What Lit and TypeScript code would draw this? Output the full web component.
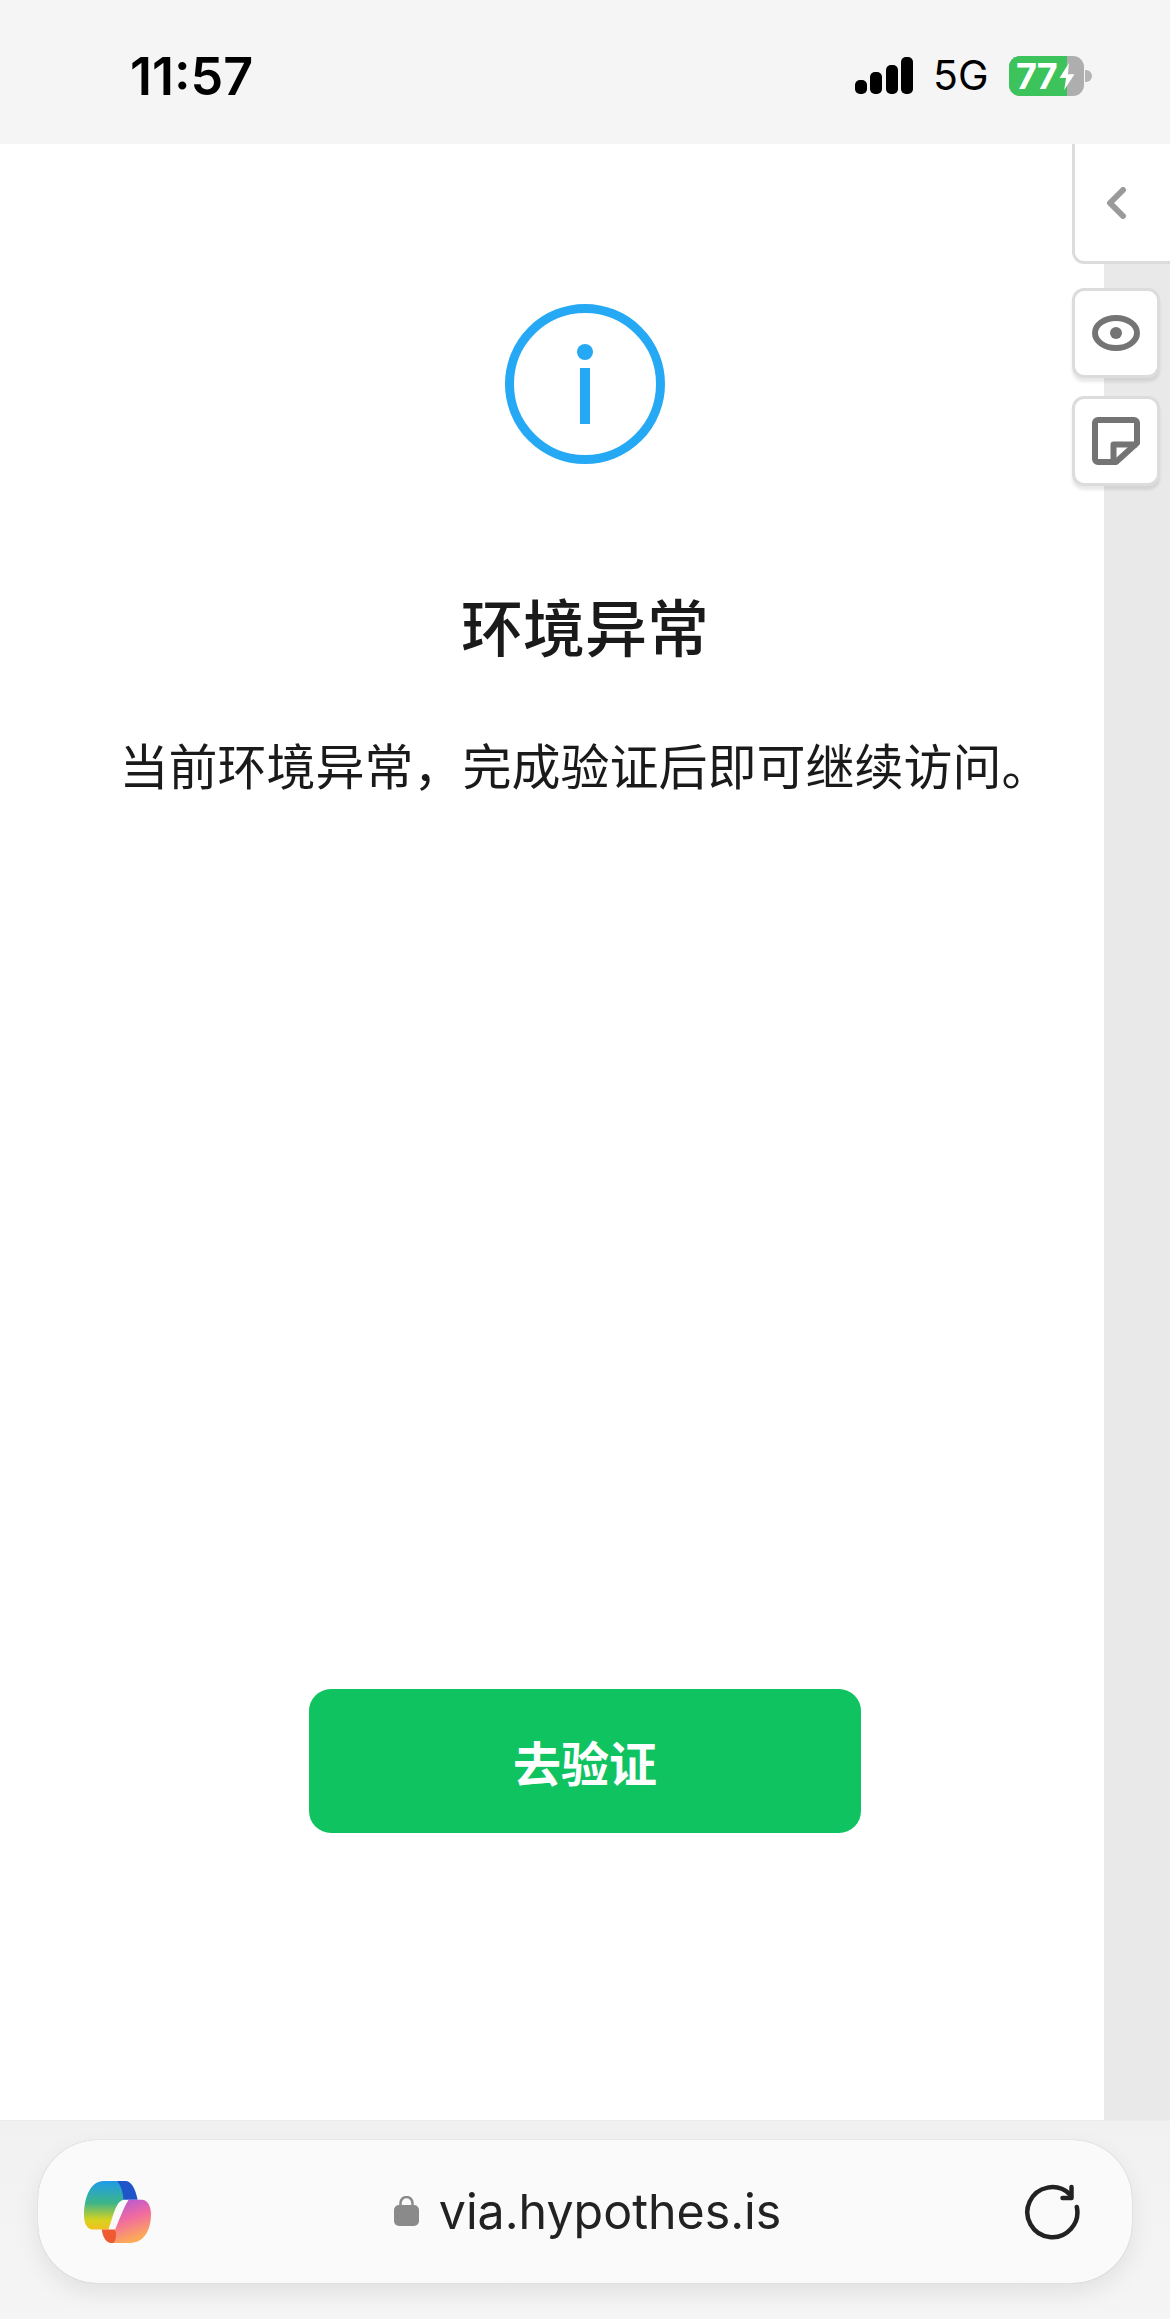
import { LitElement, html, css } from "lit";
import { customElement } from "lit/decorators.js";

@customElement("app-root")
export class AppRoot extends LitElement {
  static styles = css`
    :host { display: block; width: 1170px; height: 2319px; overflow: hidden; background: #fff; font-family: "Noto Sans CJK SC", "Noto Sans", sans-serif; }
    .page { display: flex; flex-direction: column; height: 2319px; }
    .status { height: 144px; flex: none; background: #f5f5f5; display: flex; justify-content: space-between; align-items: center; padding: 10px 78px 0 130px; box-sizing: border-box; }
    .time { font: 600 52px/1 Inter, "Liberation Sans", sans-serif; color: #000; }
    .sys { display: flex; align-items: center; margin-top: -3px; }
    .sig { width: 58px; height: 37px; display: block; }
    .net { font: 400 41px/1 Inter, "Liberation Sans", sans-serif; color: #000; margin-left: 20px; width: 54px; }
    .bat { margin-left: 22px; width: 75px; height: 40px; border-radius: 11px; background: #aeaeae; position: relative; display: flex; }
    .bat-fill { width: 58px; background: #3cc35b; border-radius: 11px 0 0 11px; }
    .bat-txt { position: absolute; left: 7px; top: 0; font: 700 36px/40px Inter, "Liberation Sans", sans-serif; color: #fff; letter-spacing: -1px; }
    .bolt { position: absolute; left: 49px; top: 7px; width: 18px; height: 27px; }
    .nub { width: 7px; height: 12px; margin-left: 1px; background: #b5b5b5; border-radius: 0 6px 6px 0; }

    .main { flex: 1; position: relative; display: flex; flex-direction: column; align-items: center; background: #fff; }
    .rail { position: absolute; left: 1104px; right: 0; top: 119px; bottom: 0; background: #e9e9e9; }
    .tab { position: absolute; left: 1072px; right: 0; top: 0; height: 120px; box-sizing: border-box; background: #fff; border: 3px solid #dcdcdc; border-width: 0 0 3px 3px; border-radius: 0 0 0 12px; display: flex; align-items: center; justify-content: center; padding-right: 14px; }
    .tab svg { width: 22px; height: 32px; }
    .tool { position: absolute; left: 1072px; width: 88px; height: 90px; box-sizing: border-box; background: #fff; border: 3px solid #dcdcdc; border-radius: 12px; box-shadow: 0 4px 3px rgba(0,0,0,.09); display: flex; align-items: center; justify-content: center; }
    .eye { top: 144px; }
    .note { top: 252px; }
    .tool svg { width: 48px; height: 48px; }

    .info { width: 160px; height: 160px; margin-top: 160px; display: block; }
    h1 { margin: 121px 0 0; font-size: 62px; line-height: 80px; font-weight: 500; color: #1a1a1a; }
    p { margin: 64px 0 0; font-size: 49px; line-height: 70px; font-weight: 400; color: #1a1a1a; white-space: nowrap; }
    .btn { margin-top: 890px; width: 552px; height: 144px; border-radius: 22px; background: #0fc360; color: #fff; display: flex; align-items: center; justify-content: center; font-size: 48px; font-weight: 700; border: 0; font-family: inherit; padding: 0; }

    .bar { height: 199px; flex: none; background: linear-gradient(#f1f1f1, #f5f5f5); padding: 19px 38px 0; box-sizing: border-box; border-top: 1px solid #ececec; }
    .pill { height: 143px; border-radius: 60px; background: #fafafa; box-shadow: 0 0 1px rgba(0,0,0,.25), 0 10px 24px rgba(0,0,0,.08); display: flex; align-items: center; padding: 0 52px 0 46px; box-sizing: border-box; }
    .logo { width: 67px; height: 62px; flex: none; }
    .addr { flex: 1; display: flex; align-items: center; justify-content: center; gap: 20px; }
    .lock { width: 25px; height: 30px; flex: none; }
    .url { font: 400 48.300px/1.2 Inter, "Liberation Sans", sans-serif; color: #222; }
    .reload { width: 56px; height: 56px; flex: none; }
  `;

  render() {
    return html`
      <div class="page">
        <div class="status">
          <div class="time">11:57</div>
          <div class="sys">
            <svg class="sig" viewBox="0 0 58 37"><rect x="0" y="23" width="12" height="14" rx="5" /><rect x="15" y="15" width="12" height="22" rx="5" /><rect x="31" y="8" width="12" height="29" rx="5" /><rect x="46" y="0" width="12" height="37" rx="5" /></svg>
            <div class="net">5G</div>
            <div class="bat">
              <div class="bat-fill"></div>
              <div class="bat-txt">77</div>
              <svg class="bolt" viewBox="0 0 18 29"><path fill="#fff" d="M11 0 1 16h7l-2 13 11-17h-7z" /></svg>
            </div>
            <div class="nub"></div>
          </div>
        </div>
        <div class="main">
          <svg class="info" viewBox="0 0 160 160">
            <circle cx="80" cy="80" r="75.5" fill="none" stroke="#25a9f5" stroke-width="9" />
            <circle cx="80" cy="48" r="8" fill="#25a9f5" />
            <rect x="75" y="64" width="10" height="56" fill="#25a9f5" />
          </svg>
          <h1>环境异常</h1>
          <p>当前环境异常，完成验证后即可继续访问。</p>
          <button class="btn">去验证</button>

          <div class="rail"></div>
          <div class="tab">
            <svg viewBox="0 0 22 32"><path d="M18 3 5 16l13 13" fill="none" stroke="#9a9a9a" stroke-width="6" stroke-linecap="round" stroke-linejoin="round" /></svg>
          </div>
          <div class="tool eye">
            <svg viewBox="0 0 48 48">
              <ellipse cx="24" cy="24" rx="21" ry="15" fill="none" stroke="#747474" stroke-width="6" />
              <circle cx="24" cy="24" r="6" fill="#747474" />
            </svg>
          </div>
          <div class="tool note">
            <svg viewBox="0 0 48 48">
              <path d="M6 3h36a3 3 0 0 1 3 3v20L24 45H6a3 3 0 0 1-3-3V6a3 3 0 0 1 3-3Z" fill="none" stroke="#747474" stroke-width="6" stroke-linejoin="round" />
              <path d="M21.500 45V27.500H45" fill="none" stroke="#747474" stroke-width="6" stroke-linejoin="round" />
            </svg>
          </div>
        </div>
        <div class="bar">
          <div class="pill">
            <svg class="logo" viewBox="72 62 200 166" preserveAspectRatio="none">
              <defs>
                <linearGradient id="gl" x1="0" y1="0" x2="0" y2="1">
                  <stop offset="0" stop-color="#1f9be8" /><stop offset=".45" stop-color="#3db58a" /><stop offset=".8" stop-color="#d7d21f" /><stop offset="1" stop-color="#f0c020" />
                </linearGradient>
                <linearGradient id="gr" x1="0" y1="0" x2=".3" y2="1">
                  <stop offset="0" stop-color="#a958dc" /><stop offset=".5" stop-color="#f16aa0" /><stop offset="1" stop-color="#fdaa58" />
                </linearGradient>
              </defs>
              <path fill="#1f55c8" d="M160 62h35c20 0 30 22 37 50h-50z" />
              <path fill="url(#gl)" d="M130 62h40c10 8 18 28 20 50-15 3-22 18-30 38l-15 42H98c-16 0-26-17-26-37C72 100 95 62 130 62Z" />
              <path fill="#ee5a32" d="M125 192h40c7 13 5 28-3 36h-12c-15-3-22-18-25-36Z" />
              <path fill="url(#gr)" d="M205 112h40c17 0 27 18 27 38 0 48-24 78-62 78h-50c8-8 10-23 5-36 10-22 27-62 40-80Z" />
            </svg>
            <div class="addr">
              <svg class="lock" viewBox="0 0 25 30"><path d="M6.500 12V7a6 6 0 0 1 12 0v5" fill="none" stroke="#8a8a8a" stroke-width="2.500" /><rect x="0" y="9" width="25" height="21" rx="5" fill="#8a8a8a" /></svg>
              <span class="url">via.hypothes.is</span>
            </div>
            <svg class="reload" viewBox="15.500 13 56 56">
              <path d="M68.300 36A25 25 0 1 1 61 23" fill="none" stroke="#222" stroke-width="4.500" stroke-linecap="round" />
              <path d="M54 27H63V16" fill="none" stroke="#222" stroke-width="4.500" stroke-linecap="round" stroke-linejoin="round" />
            </svg>
          </div>
        </div>
      </div>
    `;
  }
}
